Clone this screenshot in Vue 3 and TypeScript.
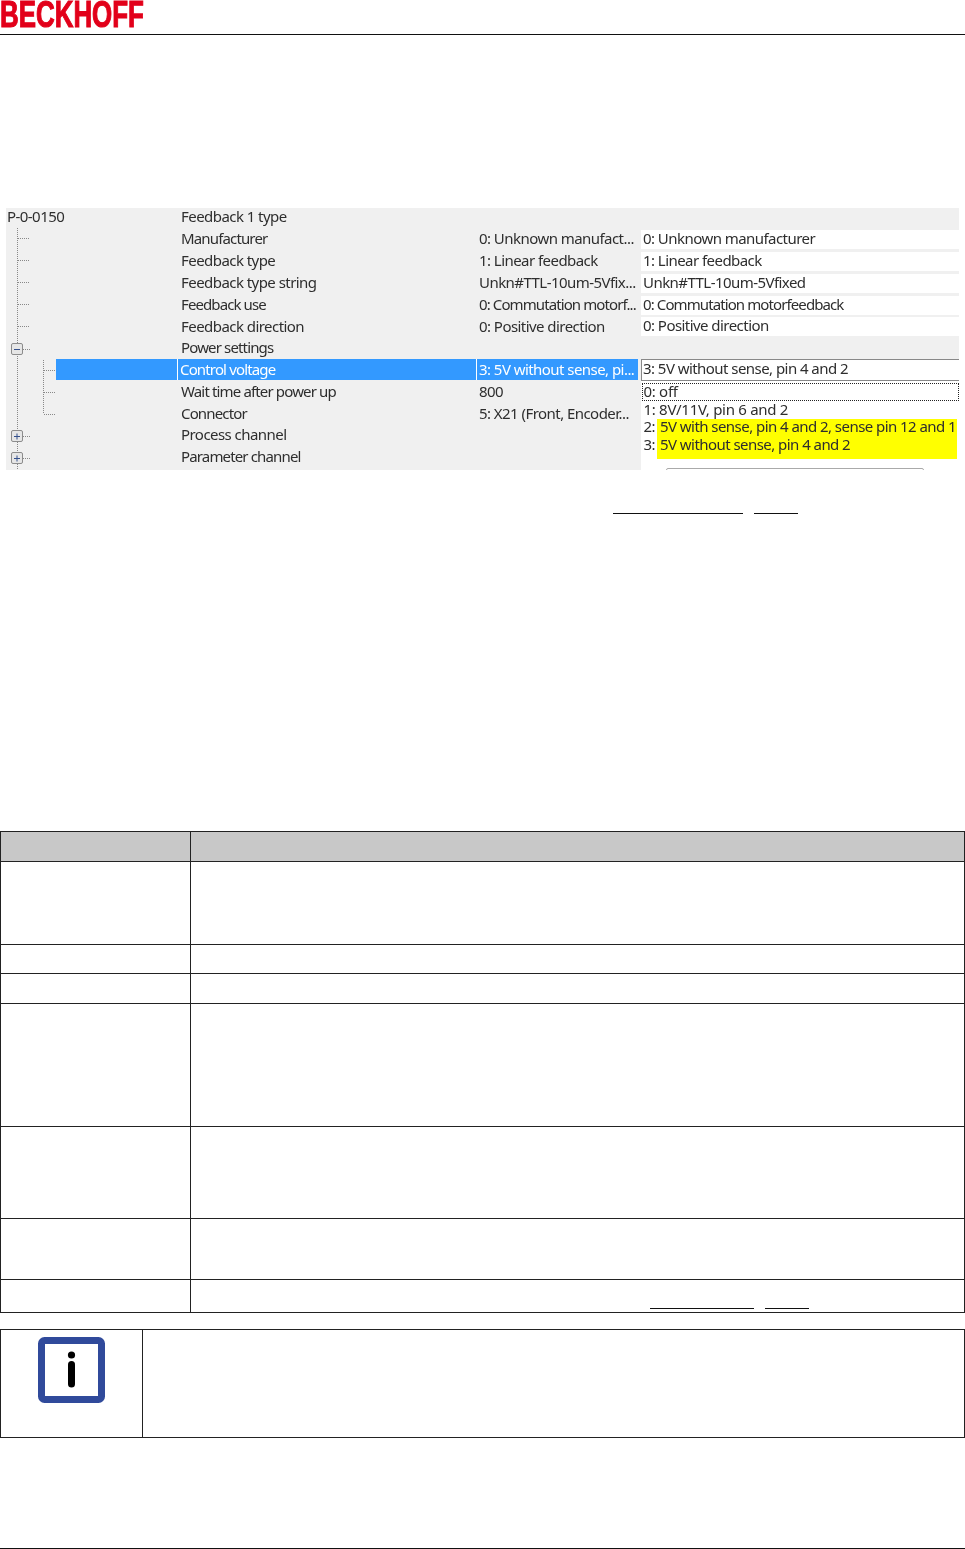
<script setup lang="ts">
interface Row {
  name: string
  value?: string
  edit?: string
  selected?: boolean
  tightName?: boolean
  tightAll?: boolean
  low?: boolean
}

const rows: Row[] = [
  { name: 'Feedback 1 type' },
  { name: 'Manufacturer', value: '0: Unknown manufact...', edit: '0: Unknown manufacturer', tightName: true },
  { name: 'Feedback type', value: '1: Linear feedback', edit: '1: Linear feedback' },
  { name: 'Feedback type string', value: 'Unkn#TTL-10um-5Vfix...', edit: 'Unkn#TTL-10um-5Vfixed', low: true },
  { name: 'Feedback use', value: '0: Commutation motorf...', edit: '0: Commutation motorfeedback', tightAll: true, low: true },
  { name: 'Feedback direction', value: '0: Positive direction', edit: '0: Positive direction', low: true },
  { name: 'Power settings', tightName: true },
  { name: 'Control voltage', value: '3: 5V without sense, pi...', selected: true, tightName: true },
  { name: 'Wait time after power up', value: '800', tightName: true, low: true },
  { name: 'Connector', value: '5: X21 (Front, Encoder...', tightName: true, low: true },
  { name: 'Process channel' },
  { name: 'Parameter channel', tightName: true },
]

const stubs1 = [238, 260, 282, 304, 326]
const stubs2 = [370, 392, 414]
const boxes = [
  { y: 349, plus: false },
  { y: 436, plus: true },
  { y: 458, plus: true },
]

const tableRows = [83, 29, 30, 123, 92, 61]
</script>

<template>
  <div class="page">
    <header class="top">
      <span class="logo">BECKHOFF</span>
    </header>

    <section class="panel">
      <svg class="tree" width="60" height="262" viewBox="0 208 60 262" aria-hidden="true">
        <path d="M17.5 228V470" class="dots" />
        <path d="M43.5 360V414" class="dots" />
        <path v-for="y in stubs1" :key="y" :d="`M18 ${y + 0.5}H30`" class="dots" />
        <path v-for="y in stubs2" :key="y" :d="`M44 ${y + 0.5}H56`" class="dots" />
        <g v-for="b in boxes" :key="b.y">
          <path :d="`M23 ${b.y + 0.5}H30`" class="dots" />
          <rect x="11.5" :y="b.y - 5.5" width="11" height="11" rx="1.5" class="box" />
          <path :d="`M14 ${b.y + 0.5}H20`" class="sign" />
          <path v-if="b.plus" :d="`M17 ${b.y - 2.5}V${b.y + 3.5}`" class="sign" />
        </g>
      </svg>

      <div
        v-for="r in rows"
        :key="r.name"
        class="row"
        :class="{ selected: r.selected, 'tight-name': r.tightName, 'tight-all': r.tightAll, low: r.low }"
      >
        <div class="c-tree"><span v-if="r.name === 'Feedback 1 type'" class="id">P-0-0150</span></div>
        <div class="c-name">{{ r.name }}</div>
        <div class="c-value">{{ r.value }}</div>
        <div v-if="r.edit" class="c-edit">{{ r.edit }}</div>
      </div>

      <div class="combo">
        <div class="combo-input">3: 5V without sense, pin 4 and 2</div>
        <ul class="combo-list">
          <li class="opt plain focus">0: off</li>
          <li class="opt plain">1: 8V/11V, pin 6 and 2</li>
          <li class="opt"><span class="num">2: </span><mark>5V with sense, pin 4 and 2, sense pin 12 and 1</mark></li>
          <li class="opt"><span class="num">3: </span><mark class="last">5V without sense, pin 4 and 2</mark></li>
        </ul>
        <div class="combo-btn"></div>
      </div>
    </section>

    <div class="caption">
      <span class="link l130"></span>
      <span class="link l44"></span>
    </div>

    <table class="spec">
      <colgroup>
        <col class="col-a" />
        <col />
      </colgroup>
      <tbody>
        <tr class="head"><th></th><th></th></tr>
        <tr v-for="(h, i) in tableRows" :key="i" :style="{ height: h + 'px' }"><td></td><td></td></tr>
        <tr class="last-row">
          <td></td>
          <td><div class="links"><span class="link l104"></span><span class="link l44"></span></div></td>
        </tr>
      </tbody>
    </table>

    <table class="note">
      <colgroup>
        <col class="col-n" />
        <col />
      </colgroup>
      <tbody>
        <tr>
          <td class="note-icon">
            <svg width="68" height="66" viewBox="0 0 68 66" aria-hidden="true">
              <rect x="3.5" y="3.5" width="60" height="59" rx="3" fill="#fff" stroke="#304a9b" stroke-width="7" />
              <circle cx="33.5" cy="18" r="3.6" fill="#000" />
              <rect x="30" y="24" width="7" height="26.5" rx="3.5" fill="#000" />
            </svg>
          </td>
          <td></td>
        </tr>
      </tbody>
    </table>

    <footer class="bottom"></footer>
  </div>
</template>

<style scoped>
.page {
  width: 965px;
  height: 1549px;
  display: flex;
  flex-direction: column;
  background: #fff;
  overflow: hidden;
  font-family: "Noto Sans", Tahoma, sans-serif;
}

.top {
  height: 35px;
  box-sizing: border-box;
  border-bottom: 1px solid #111;
  flex: none;
}

.logo {
  display: block;
  font-family: "Liberation Sans", Arial, sans-serif;
  font-weight: 700;
  font-size: 37px;
  line-height: 30px;
  color: #e2001a;
  transform: scaleX(0.7);
  transform-origin: 0 0;
  -webkit-text-stroke: 1.1px #e2001a;
  white-space: nowrap;
}

.panel {
  position: relative;
  flex: none;
  margin: 173px 6px 0;
  height: 262px;
  background: #f0f0f0;
  font-size: 15px;
  color: #2e2e2e;
  letter-spacing: -0.55px;
  filter: blur(0.3px);
}

.tree {
  position: absolute;
  left: 0;
  top: 0;
  transform: translateX(-6px);
  overflow: visible;
}

.dots {
  fill: none;
  stroke: #888;
  stroke-width: 1;
  stroke-dasharray: 1 1;
}

.box {
  fill: #e6e6e6;
  stroke: #8c8c8c;
}

.sign {
  fill: none;
  stroke: #35508c;
  stroke-width: 1;
}

.row {
  height: 21.8px;
  display: grid;
  grid-template-columns: 170px 299px 164px 1fr;
  line-height: 21.8px;
  white-space: nowrap;
}

.row:first-of-type {
  height: 19.8px;
  line-height: 17px;
}

.low .c-name,
.low .c-value {
  padding-top: 1px;
  box-sizing: border-box;
}

.tight-name .c-name {
  letter-spacing: -0.85px;
}

.tight-all {
  letter-spacing: -0.9px;
}

.c-name {
  padding-left: 5px;
}

.c-value {
  padding-left: 4px;
}

.c-tree {
  padding-left: 1px;
}

.c-edit {
  margin: 2.5px 0 0 2px;
  height: 19px;
  line-height: 17px;
  padding-left: 2px;
  background: #fff;
}

.selected .c-name,
.selected .c-value {
  background: #3399ff;
  color: #fff;
  border-left: 1px solid #fff;
  margin-left: 1px;
  padding-left: 2px;
}

.selected .c-name {
  margin-right: -1px;
}

.selected .c-value {
  margin-right: 1px;
}

.selected .c-tree {
  position: relative;
}

.selected .c-tree::after {
  content: "";
  position: absolute;
  left: 50px;
  right: -1px;
  top: 0;
  bottom: 0;
  background: #3399ff;
}

.combo {
  position: absolute;
  left: 635px;
  right: 0;
  top: 151px;
  bottom: 0;
  background: #fff;
  overflow: hidden;
}

.combo-input {
  height: 22px;
  box-sizing: border-box;
  border: 1px solid #888;
  border-right: 0;
  line-height: 17px;
  padding-left: 1px;
}

.combo-list {
  list-style: none;
  margin: 0;
  padding: 2px 0 0 1px;
}

.opt {
  height: 17.5px;
  line-height: 17.5px;
  padding-left: 1.5px;
  white-space: nowrap;
}

.plain {
  letter-spacing: -0.3px;
}

.focus {
  outline: 1px dotted #222;
  outline-offset: -1px;
}

.num {
  display: inline-block;
  width: 13.5px;
}

mark {
  background: #ffff00;
  color: #2e2e2e;
  display: inline-block;
  box-sizing: border-box;
  width: 300px;
  height: 17px;
  margin-top: 1px;
  padding-left: 3px;
  line-height: 15.5px;
  vertical-align: top;
}

mark.last {
  height: 23px;
  margin-top: 0;
  line-height: 17.5px;
}

.combo-btn {
  position: absolute;
  left: 25px;
  top: 109px;
  width: 256px;
  height: 6px;
  border: 1px solid #aaa;
  border-radius: 2px;
}

.caption {
  flex: none;
  margin-top: 43px;
  padding-left: 613px;
  display: flex;
  gap: 11px;
}

.link {
  display: block;
  height: 1px;
  background: #111;
}

.l130 { width: 130px; }
.l104 { width: 104px; }
.l44 { width: 44px; }

table {
  flex: none;
  width: 965px;
  border-collapse: collapse;
  table-layout: fixed;
}

td,
th {
  border: 1px solid #222;
  padding: 0;
}

.spec {
  margin-top: 317px;
}

.col-a {
  width: 190px;
}

.head {
  height: 30px;
}

.head th {
  background: #c8c8c8;
}

.last-row {
  height: 33px;
}

.links {
  display: flex;
  gap: 11px;
  padding: 24px 0 0 459px;
}

.note {
  margin-top: 16px;
  height: 109px;
}

.col-n {
  width: 142px;
}

.note-icon {
  vertical-align: top;
  padding: 7px 0 0 37px;
}

.note-icon svg {
  display: block;
}

.bottom {
  margin-top: auto;
  height: 1px;
  flex: none;
  background: #111;
}
</style>
